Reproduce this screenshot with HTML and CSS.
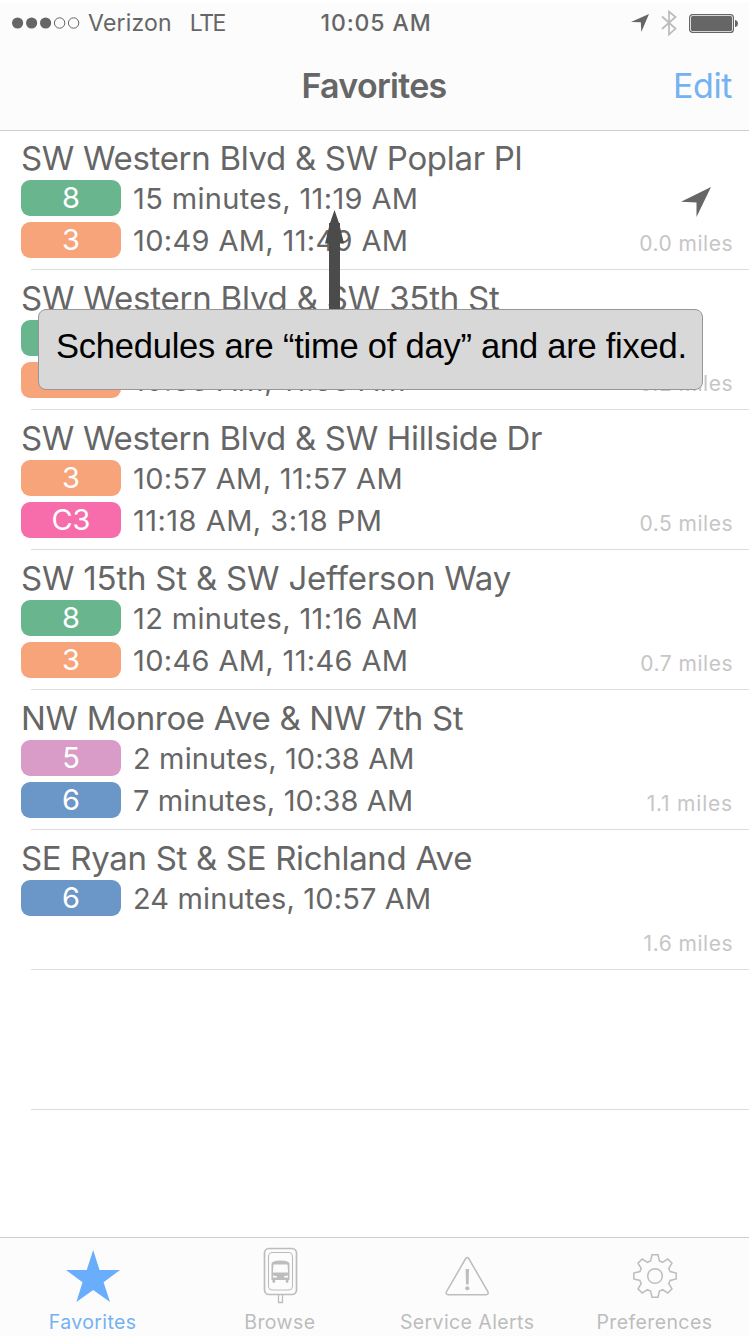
FILE: index.html
```html
<!DOCTYPE html>
<html lang="en">
<head>
<meta charset="utf-8">
<title>Favorites</title>
<link rel="stylesheet" href="styles.css">
</head>
<body>
<div class="screen">
  <header class="header">
    <div class="status">
      <div class="carrier">
        <svg class="signal" width="68" height="12" viewBox="0 0 68 12"><g fill="#666"><circle cx="5.6" cy="6" r="5.6"/><circle cx="19.6" cy="6" r="5.6"/><circle cx="33.6" cy="6" r="5.6"/></g><g fill="none" stroke="#666" stroke-width="1"><circle cx="47.6" cy="6" r="5.2"/><circle cx="61.6" cy="6" r="5.2"/></g></svg>
        <span class="verizon">Verizon</span><span class="lte">LTE</span>
      </div>
      <div class="clock">10:05 AM</div>
      <div class="indicators">
        <svg width="18" height="18" viewBox="0 0 18 18"><path d="M18 0 10.300 18 9.800 8.200 0 8z" fill="#666"/></svg>
        <svg class="bt" width="16" height="28" viewBox="0 0 16 28"><path d="M1 7.500 14.500 19.500 8 25.500V2.500L14.500 8 1 20" fill="none" stroke="#bbb" stroke-width="1.700"/></svg>
        <svg class="battery" width="49" height="19" viewBox="0 0 49 19"><rect x=".6" y=".6" width="43.800" height="17.800" rx="3" fill="none" stroke="#666" stroke-width="1.200"/><rect x="2" y="2" width="41" height="15" rx="1.500" fill="#666"/><path d="M46 6h.5q2.500.6 2.500 3.500t-2.500 3.500H46z" fill="#666"/></svg>
      </div>
    </div>
    <div class="navbar"><h1>Favorites</h1><a class="edit">Edit</a></div>
  </header>
  <main class="list">
    <section class="row"><h2>SW Western Blvd &amp; SW Poplar Pl</h2>
      <div class="line"><b class="pill green">8</b><span class="time">15 minutes, 11:19 AM</span></div>
      <div class="line"><b class="pill orange">3</b><span class="time">10:49 AM, 11:49 AM</span></div>
      <svg class="near" width="30" height="30" viewBox="0 0 30 30"><path d="M30 0 15.500 30V15.500L0 14.800z" fill="#666"/></svg>
      <span class="miles">0.0 miles</span></section>
    <section class="row"><h2 class="wide">SW Western Blvd &amp; SW 35th St</h2>
      <div class="line"><b class="pill green">8</b><span class="time">14 minutes, 11:18 AM</span></div>
      <div class="line"><b class="pill orange">3</b><span class="time">10:53 AM, 11:53 AM</span></div>
      <span class="miles">0.2 miles</span></section>
    <section class="row"><h2>SW Western Blvd &amp; SW Hillside Dr</h2>
      <div class="line"><b class="pill orange">3</b><span class="time">10:57 AM, 11:57 AM</span></div>
      <div class="line"><b class="pill pink">C3</b><span class="time loose">11:18 AM, 3:18 PM</span></div>
      <span class="miles">0.5 miles</span></section>
    <section class="row"><h2 class="wide">SW 15th St &amp; SW Jefferson Way</h2>
      <div class="line"><b class="pill green">8</b><span class="time">12 minutes, 11:16 AM</span></div>
      <div class="line"><b class="pill orange">3</b><span class="time">10:46 AM, 11:46 AM</span></div>
      <span class="miles">0.7 miles</span></section>
    <section class="row"><h2>NW Monroe Ave &amp; NW 7th St</h2>
      <div class="line"><b class="pill mauve">5</b><span class="time tight">2 minutes, 10:38 AM</span></div>
      <div class="line"><b class="pill blue">6</b><span class="time tight">7 minutes, 10:38 AM</span></div>
      <span class="miles loose-miles">1.1 miles</span></section>
    <section class="row"><h2>SE Ryan St &amp; SE Richland Ave</h2>
      <div class="line"><b class="pill blue">6</b><span class="time tight">24 minutes, 10:57 AM</span></div>
      <span class="miles">1.6 miles</span></section>
    <section class="row"></section>
  </main>
  <nav class="tabs">
    <a class="tab active"><svg width="66" height="60" viewBox="0 0 66 60"><path d="M33.200 12 39.500 32H60L43.600 44.200 50 64 33.200 52 16.400 64 22.500 44.200 6 32H26.700z" fill="#69aefc"/></svg><span>Favorites</span></a>
    <a class="tab"><svg width="66" height="60" viewBox="0 0 66 60" fill="none" stroke="#bdbdbd"><rect x="17.500" y="10.500" width="32" height="46" rx="4.500" stroke-width="1.700"/><rect x="21.500" y="14.500" width="24" height="37.500" rx="4" stroke-width="1.100"/><path d="M31.500 57v7.500h4V57" stroke-width="1.300"/><path d="M24.500 26q0-3.500 9-3.500t9 3.500V42h-1v1.500a1.300 1.300 0 0 1-2.800 0V42H28.200v1.500a1.300 1.300 0 0 1-2.800 0V42h-1zM26.500 26.500l-.6 8h15.200l-.6-8zM26 37.500v2h4v-1.300zM41 37.500v2h-4v-1.300z" fill="#bdbdbd" fill-rule="evenodd" stroke="none"/></svg><span>Browse</span></a>
    <a class="tab"><svg width="66" height="60" viewBox="0 0 66 60"><path d="M31.700 20.500q1.500-2 3 0L54 53.800q.8 2.700-1.800 2.900H14.200q-2.700-.3-1.800-2.900z" fill="none" stroke="#bdbdbd" stroke-width="1.500"/><path d="M31.600 31h3.400l-.4 15.500H32z" fill="#bdbdbd"/><circle cx="33.300" cy="50.300" r="2.100" fill="#bdbdbd"/></svg><span>Service Alerts</span></a>
    <a class="tab"><svg width="66" height="60" viewBox="0 0 66 60"><g fill="none" stroke="#bdbdbd" stroke-width="1.500" transform="translate(34 38)"><circle r="7.300"/><path d="M-3-21.200H3L4.400-15.100Q6-14.700 7.500-13.700L12.800-17 17-12.800 13.700-7.500Q14.700-6 15.100-4.400L21.200-3V3L15.100 4.400Q14.700 6 13.700 7.500L17 12.800 12.800 17 7.500 13.700Q6 14.700 4.400 15.100L3 21.200H-3L-4.400 15.100Q-6 14.700-7.500 13.700L-12.800 17-17 12.800-13.700 7.500Q-14.700 6-15.100 4.400L-21.200 3V-3L-15.100-4.400Q-14.700-6-13.700-7.500L-17-12.800-12.800-17-7.500-13.700Q-6-14.700-4.400-15.100z"/></g></svg><span>Preferences</span></a>
  </nav>
  <svg class="arrow" width="20" height="100" viewBox="0 0 20 100"><path d="M9.500 0 14 13V13H15V17L19 33.500H15V99H4V33.500H0L4 17V13H5z" fill="#4b4b4b"/></svg>
  <div class="callout">Schedules are “time of day” and are fixed.</div>
</div>
</body>
</html>
```
FILE: styles.css
```css
* { box-sizing: border-box; }
body { margin: 0; background: #fff; font-family: Inter, Roboto, sans-serif; color: #666; }
.screen { position: relative; width: 749px; height: 1336px; padding-top: 2px; display: flex; flex-direction: column; }
.header { height: 129px; background: #fcfcfc; border-bottom: 1px solid #cdcdcd; flex: none; }
.status { height: 42px; display: grid; grid-template-columns: 1fr auto 1fr; align-items: center; padding: 0 11px 0 12px; font-size: 23px; line-height: 42px; white-space: nowrap; }
.carrier { display: flex; align-items: center; }
.signal { margin-right: 8px; }
.verizon { letter-spacing: .2px; margin-right: 18px; }
.lte { letter-spacing: -1.5px; }
.clock { font-weight: 500; letter-spacing: .9px; margin-left: 2px; }
.indicators { display: flex; align-items: center; justify-content: flex-end; }
.bt { margin: 0 12px 0 12px; }
.navbar { display: grid; grid-template-columns: 1fr auto 1fr; align-items: center; height: 82px; padding: 0 17px 0 16px; font-size: 34px; }
h1 { grid-column: 2; font-size: 34px; font-weight: 600; margin: 0; letter-spacing: -.7px; }
.edit { justify-self: end; color: #74b2f1; font-size: 34px; letter-spacing: -.4px; }
.list { flex: 1; margin-top: -1px; }
.row { position: relative; height: 140px; padding: 6px 0 0 21px; display: flex; flex-direction: column; gap: 6px; }
.row::after { content: ""; position: absolute; left: 31px; right: 0; bottom: 0; height: 1px; background: #dcdcdc; }
h2 { margin: 0 0 -2px; height: 40px; line-height: 44px; font-size: 33px; font-weight: 400; white-space: nowrap; letter-spacing: -.32px; }
.wide { letter-spacing: -.21px; }
.line { display: flex; align-items: center; height: 36px; flex: none; gap: 12px; }
.pill { width: 100px; height: 36px; border-radius: 9px; color: #fff; font-weight: 400; font-size: 29px; line-height: 36px; text-align: center; }
.green { background: #68b58e; }
.orange { background: #f8a47b; }
.pink { background: #f76dab; }
.mauve { background: #d99bc7; }
.blue { background: #6a96c8; }
.time { font-size: 29px; line-height: 36px; padding-top: 2px; white-space: nowrap; letter-spacing: .35px; }
.loose { letter-spacing: .47px; }
.tight { letter-spacing: .13px; }
.miles { position: absolute; right: 16px; bottom: 14px; font-size: 21px; line-height: 24px; color: #c6c6c6; letter-spacing: .5px; }
.loose-miles { letter-spacing: .8px; }
.near { position: absolute; left: 681px; top: 57px; }
.tabs { height: 99px; flex: none; background: #fcfcfc; border-top: 1px solid #cdcdcd; display: grid; grid-template-columns: repeat(4, 187.25px); margin-left: -1px; padding-left: 0; }
.tab { display: flex; flex-direction: column; align-items: center; font-size: 19.5px; color: #bdbdbd; letter-spacing: .4px; white-space: nowrap; }
.tab svg { overflow: visible; }
.tab span { line-height: 24px; margin-top: 12px; }
.active { color: #74b2f1; }
.arrow { position: absolute; left: 325px; top: 210px; }
.callout { position: absolute; left: 38px; top: 309px; width: 665px; height: 81px; border: 1px solid #969696; border-radius: 8px; background: #d8d8d8; color: #000; font: 34.5px/73px "Liberation Sans", Arial, sans-serif; letter-spacing: -.23px; padding-left: 17px; white-space: nowrap; }
```
